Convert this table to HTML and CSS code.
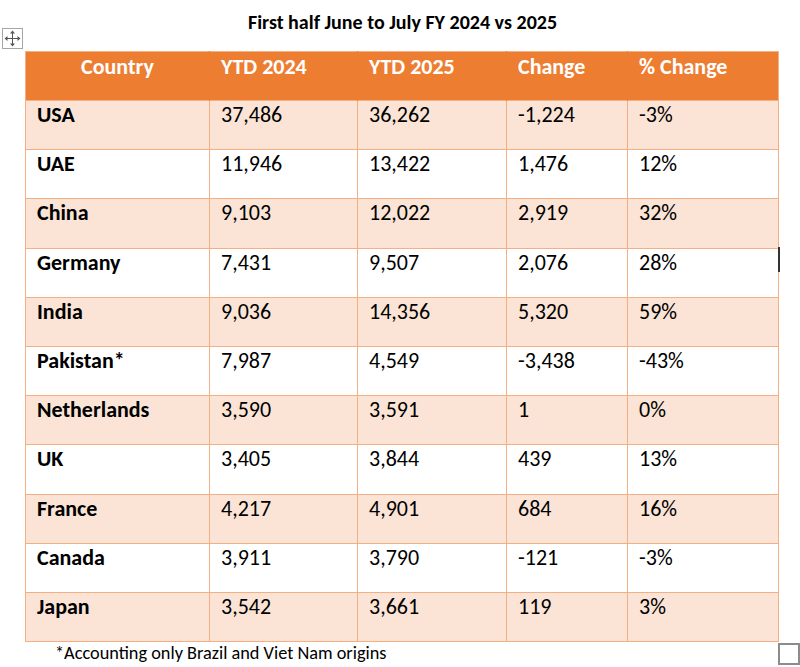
FILE: index.html
```html
<!DOCTYPE html>
<html>
<head>
<meta charset="utf-8">
<link rel="stylesheet" href="styles.css">
</head>
<body>
<div class="page">
  <h1 class="title">First half June to July FY 2024 vs 2025</h1>
  <div class="table-wrap">
    <span class="move-handle" aria-hidden="true">
      <svg width="17" height="17" viewBox="0 0 17 17">
        <g fill="none" stroke="#555" stroke-width="1">
          <line x1="8.5" y1="2" x2="8.5" y2="15"/>
          <line x1="2" y1="8.5" x2="15" y2="8.5"/>
        </g>
        <g fill="#555">
          <polygon points="8.5,0.5 6,3.5 11,3.5"/>
          <polygon points="8.5,16.5 6,13.5 11,13.5"/>
          <polygon points="0.5,8.5 3.5,6 3.5,11"/>
          <polygon points="16.5,8.5 13.5,6 13.5,11"/>
        </g>
      </svg>
    </span>
    <table class="data">
      <colgroup>
        <col class="c1"><col class="c2"><col class="c3"><col class="c4"><col class="c5">
      </colgroup>
      <thead>
        <tr>
          <th class="center">Country</th>
          <th>YTD 2024</th>
          <th>YTD 2025</th>
          <th>Change</th>
          <th>% Change</th>
        </tr>
      </thead>
      <tbody>
        <tr class="alt"><td class="name">USA</td><td>37,486</td><td>36,262</td><td>-1,224</td><td>-3%</td></tr>
        <tr><td class="name">UAE</td><td>11,946</td><td>13,422</td><td>1,476</td><td>12%</td></tr>
        <tr class="alt"><td class="name">China</td><td>9,103</td><td>12,022</td><td>2,919</td><td>32%</td></tr>
        <tr><td class="name">Germany</td><td>7,431</td><td>9,507</td><td>2,076</td><td>28%</td></tr>
        <tr class="alt"><td class="name">India</td><td>9,036</td><td>14,356</td><td>5,320</td><td>59%</td></tr>
        <tr><td class="name">Pakistan*</td><td>7,987</td><td>4,549</td><td>-3,438</td><td>-43%</td></tr>
        <tr class="alt"><td class="name">Netherlands</td><td>3,590</td><td>3,591</td><td>1</td><td>0%</td></tr>
        <tr><td class="name">UK</td><td>3,405</td><td>3,844</td><td>439</td><td>13%</td></tr>
        <tr class="alt"><td class="name">France</td><td>4,217</td><td>4,901</td><td>684</td><td>16%</td></tr>
        <tr><td class="name">Canada</td><td>3,911</td><td>3,790</td><td>-121</td><td>-3%</td></tr>
        <tr class="alt"><td class="name">Japan</td><td>3,542</td><td>3,661</td><td>119</td><td>3%</td></tr>
      </tbody>
    </table>
    <span class="caret" aria-hidden="true"></span>
    <span class="resize-handle" aria-hidden="true"></span>
  </div>
  <p class="footnote">*Accounting only Brazil and Viet Nam origins</p>
</div>
</body>
</html>
```
FILE: styles.css
```css
html, body {
  margin: 0;
  padding: 0;
  background: #ffffff;
}
body {
  font-family: Carlito, Calibri, Lato, "Liberation Sans", sans-serif;
  color: #000000;
}
.page {
  width: 800px;
  height: 667px;
  position: relative;
}
.title {
  margin: 0;
  padding-top: 10px;
  padding-left: 5px;
  height: 51px;
  box-sizing: border-box;
  font-size: 20px;
  font-weight: bold;
  line-height: 24px;
  text-align: center;
}
.table-wrap {
  position: relative;
  margin-left: 25px;
  width: 753px;
}
.data {
  border-collapse: collapse;
  table-layout: fixed;
  width: 753px;
  font-size: 22px;
}
.c1 { width: 184px; }
.c2 { width: 148px; }
.c3 { width: 149px; }
.c4 { width: 121px; }
.c5 { width: 151px; }
.data th {
  background: #ed7d31;
  color: #ffffff;
  font-weight: bold;
  text-align: left;
  vertical-align: top;
  height: 49px;
  box-sizing: border-box;
  padding: 1px 11px 0;
  line-height: 27px;
  border: 1px solid #f4b083;
  border-bottom: none;
  border-left-color: #ed7d31;
  border-right-color: #ed7d31;
}
.data th:first-child { border-left-color: #f4b083; }
.data th:last-child { border-right-color: #f4b083; }
.data th.center { text-align: center; }
.data td {
  height: 49.2px;
  box-sizing: border-box;
  vertical-align: top;
  padding: 0 11px;
  line-height: 27px;
  border: 1px solid #f4b083;
}
.data td.name { font-weight: bold; }
.data tr.alt td { background: #fbe4d5; }
.move-handle {
  position: absolute;
  left: -23px;
  top: -23px;
  width: 19px;
  height: 19px;
  border: 1px solid #a6a6a6;
  background: #fff;
  display: flex;
  align-items: center;
  justify-content: center;
}
.caret {
  position: absolute;
  left: 753px;
  top: 196px;
  width: 2px;
  height: 25px;
  background: #333;
}
.resize-handle {
  position: absolute;
  left: 753px;
  bottom: -23px;
  width: 18px;
  height: 18px;
  border: 2px solid #8c8c8c;
  background: #fff;
}
.footnote {
  margin: 0;
  padding-left: 55px;
  padding-top: 0;
  font-size: 18.3px;
  line-height: 22px;
}
```
